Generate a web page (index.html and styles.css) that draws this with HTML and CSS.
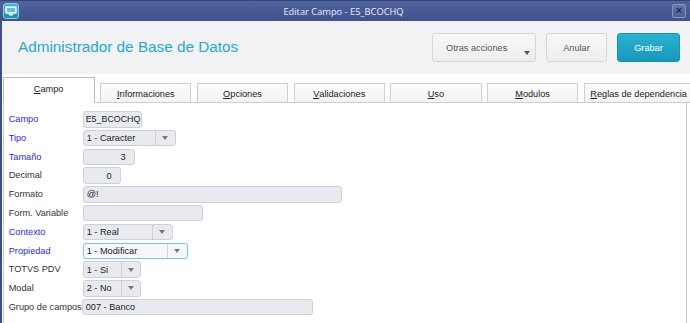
FILE: index.html
```html
<!DOCTYPE html>
<html>
<head>
<meta charset="utf-8">
<link rel="stylesheet" href="styles.css">
</head>
<body>
<div class="window">
  <div class="titlebar">
    <div class="app-icon">
      <svg width="12" height="10" viewBox="0 0 12 10"><rect x="0.5" y="0.5" width="11" height="7" rx="1" fill="#e8f6fa" stroke="#bfe6ef"/><rect x="2" y="2" width="8" height="4" fill="#63c1d6"/><rect x="4" y="8" width="4" height="1.5" fill="#e8f6fa"/></svg>
    </div>
    <div class="title-text">Editar Campo - E5_BCOCHQ</div>
    <div class="close-btn">&#215;</div>
  </div>
  <div class="header">
    <div class="app-title">Administrador de Base de Datos</div>
    <div class="actions">
      <div class="btn btn-more"><span>Otras acciones</span><span class="caret"></span></div>
      <div class="btn btn-plain">Anular</div>
      <div class="btn btn-primary">Grabar</div>
    </div>
  </div>
  <div class="tabs">
    <div class="tab active"><u>C</u>ampo</div>
    <div class="tab"><u>I</u>nformaciones</div>
    <div class="tab"><u>O</u>pciones</div>
    <div class="tab"><u>V</u>alidaciones</div>
    <div class="tab"><u>U</u>so</div>
    <div class="tab"><u>M</u>odulos</div>
    <div class="tab wide"><u>R</u>eglas de dependencia</div>
  </div>
  <div class="panel">
    <div class="row"><label class="lbl req">Campo</label><div class="field tight w59">E5_BCOCHQ</div></div>
    <div class="row"><label class="lbl req">Tipo</label><div class="select w93"><span class="val">1 - Caracter</span><span class="arrow"></span></div></div>
    <div class="row"><label class="lbl req">Tamaño</label><div class="field num w52">3</div></div>
    <div class="row"><label class="lbl">Decimal</label><div class="field num w38">0</div></div>
    <div class="row"><label class="lbl">Formato</label><div class="field w259">@!</div></div>
    <div class="row"><label class="lbl">Form. Variable</label><div class="field w120"></div></div>
    <div class="row"><label class="lbl req">Contexto</label><div class="select w90"><span class="val">1 - Real</span><span class="arrow"></span></div></div>
    <div class="row"><label class="lbl req">Propiedad</label><div class="select focus w105"><span class="val">1 - Modificar</span><span class="arrow"></span></div></div>
    <div class="row"><label class="lbl">TOTVS PDV</label><div class="select w58"><span class="val">1 - Si</span><span class="arrow"></span></div></div>
    <div class="row"><label class="lbl">Modal</label><div class="select w58"><span class="val">2 - No</span><span class="arrow"></span></div></div>
    <div class="row"><label class="lbl">Grupo de campos</label><div class="field grupo w231">007 - Banco</div></div>
  </div>
</div>
</body>
</html>
```
FILE: styles.css
```css
* { box-sizing: border-box; }
html, body { margin: 0; padding: 0; }
body {
  width: 690px;
  height: 323px;
  overflow: hidden;
  background: #ffffff;
  font-family: "Liberation Sans", Arial, sans-serif;
}
.window {
  height: 323px;
  border-left: 2px solid #3d4f8b;
  display: flex;
  flex-direction: column;
}
.titlebar {
  height: 21px;
  flex: none;
  background: linear-gradient(#50629b, #3f5290);
  border-top: 1px solid #34457d;
  display: flex;
  align-items: center;
  position: relative;
  margin-left: -2px;
  padding-left: 3px;
  padding-right: 4px;
}
.app-icon {
  width: 16px;
  height: 16px;
  border-radius: 3px;
  background: linear-gradient(#47b6cf, #1d8eab);
  border: 1px solid #8fd0e0;
  display: flex;
  align-items: center;
  justify-content: center;
}
.title-text {
  flex: 1;
  text-align: center;
  color: #e9edf7;
  font-family: "Open Sans", sans-serif;
  font-size: 9.3px;
  padding-right: 4px;
}
.close-btn {
  width: 14px;
  height: 14px;
  border-radius: 2px;
  background: linear-gradient(#6778a8, #4d5f96);
  border: 1px solid #8896be;
  color: #1e2a4f;
  font-size: 11px;
  font-weight: bold;
  line-height: 11px;
  text-align: center;
}
.header {
  height: 53px;
  flex: none;
  background: #f1f2f4;
  display: flex;
  align-items: center;
  padding-left: 16px;
  padding-right: 10px;
}
.app-title {
  flex: 1;
  color: #2ba6cd;
  font-size: 15.3px;
  padding-bottom: 2px;
}
.actions {
  display: flex;
  gap: 10px;
}
.btn {
  height: 29px;
  border-radius: 3px;
  font-size: 9.2px;
  display: flex;
  align-items: center;
  justify-content: center;
}
.btn-plain, .btn-more {
  background: linear-gradient(#f8f8f8, #ededed);
  border: 1px solid #d6d6d6;
  color: #555555;
}
.btn-more {
  width: 104px;
  justify-content: flex-start;
  padding-left: 13px;
  position: relative;
}
.caret {
  position: absolute;
  right: 5px;
  bottom: 6px;
  width: 0;
  height: 0;
  border-left: 3.5px solid transparent;
  border-right: 3.5px solid transparent;
  border-top: 4px solid #555555;
}
.btn-plain { width: 61px; }
.btn-primary {
  width: 63px;
  background: linear-gradient(#2bb2d1, #1898ba);
  border: 1px solid #1a93b3;
  color: #ffffff;
}
.tabs {
  height: 29px;
  flex: none;
  display: flex;
  align-items: flex-end;
  gap: 5.4px;
  padding-left: 0.5px;
  position: relative;
  z-index: 1;
  margin-bottom: -1px;
}
.tab {
  width: 91.3px;
  height: 20px;
  flex: none;
  border: 1px solid #cfcfcf;
  background: linear-gradient(#fbfbfb, #f3f3f3);
  font-size: 9.2px;
  color: #222222;
  display: flex;
  align-items: center;
  justify-content: center;
  padding-top: 1px;
}
.tab.active {
  width: 92.3px;
  height: 26.5px;
  background: #ffffff;
  border-color: #bcbcbc;
  border-bottom: 1px solid #ffffff;
  padding-bottom: 2px;
}
.tab.wide { width: 110px; }
.tab u { text-decoration: underline; text-underline-offset: 1px; }
.panel {
  flex: 1;
  margin-left: 0.7px;
  margin-right: 3px;
  border: 1px solid #c9c9c9;
  border-bottom: none;
  padding-top: 8px;
  padding-left: 5px;
  display: flex;
  flex-direction: column;
}
.row {
  height: 18.8px;
  display: flex;
  align-items: flex-start;
}
.lbl {
  width: 74px;
  flex: none;
  font-size: 9.2px;
  color: #333333;
  line-height: 17px;
  white-space: nowrap;
}
.lbl.req { color: #2b2bd6; }
.field, .select {
  height: 16.5px;
  border: 1px solid #cdd0d4;
  border-radius: 3px;
  background: #e8eaf0;
  font-size: 9.2px;
  color: #222222;
  display: flex;
  align-items: center;
  padding-left: 3px;
  white-space: nowrap;
  overflow: hidden;
}
.field.tight { padding-left: 2px; font-size: 8.9px; overflow: visible; }
.field.num { justify-content: flex-end; padding-right: 8px; }
.field.grupo { margin-left: -1px; }
.select { padding-left: 0; }
.select .val {
  flex: 1;
  padding-left: 3px;
  height: 100%;
  display: flex;
  align-items: center;
  border-right: 1px solid #cdd0d4;
}
.select .arrow {
  width: 19px;
  flex: none;
  display: flex;
  justify-content: center;
}
.select .arrow::after {
  content: "";
  width: 0;
  height: 0;
  border-left: 3.5px solid transparent;
  border-right: 3.5px solid transparent;
  border-top: 4px solid #777777;
}
.select.focus {
  border-color: #74cbe0;
  background: #f6f7fa;
}
.select.focus .val { border-right-color: #cfd3d8; }
.w38 { width: 38px; }
.w52 { width: 52px; }
.w58 { width: 58px; }
.w58 .arrow { width: 17.5px; }
.w59 { width: 59px; }
.w90 { width: 90px; }
.w93 { width: 93px; }
.w105 { width: 105px; }
.w120 { width: 120px; }
.w231 { width: 231px; }
.w259 { width: 259px; }
```
